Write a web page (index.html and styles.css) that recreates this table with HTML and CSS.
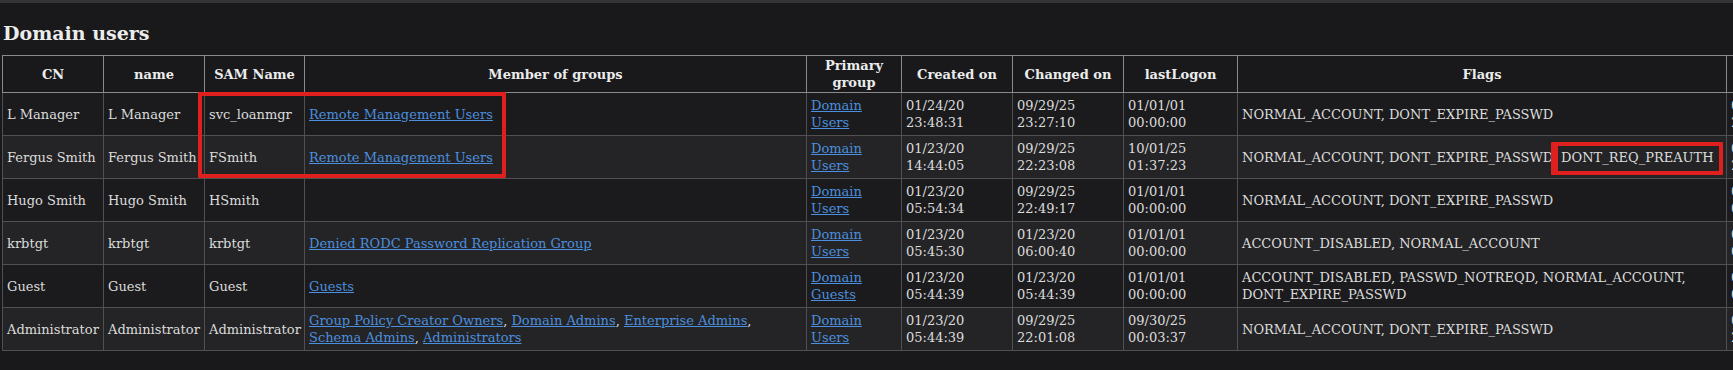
FILE: index.html
```html
<!DOCTYPE html>
<html lang="en">
<head>
<meta charset="utf-8">
<title>Domain users</title>
<link rel="stylesheet" href="styles.css">
</head>
<body>
<div class="topbar"></div>
<main class="page">
  <h3 class="title">Domain users</h3>
  <div class="table-wrap">
    <table class="users">
      <colgroup>
        <col class="c-cn"><col class="c-name"><col class="c-sam"><col class="c-groups"><col class="c-primary"><col class="c-date"><col class="c-date"><col class="c-logon"><col class="c-flags"><col class="c-extra">
      </colgroup>
      <thead>
        <tr><th>CN</th><th>name</th><th>SAM Name</th><th>Member of groups</th><th>Primary group</th><th>Created on</th><th>Changed on</th><th>lastLogon</th><th>Flags</th><th>pwdLastSet</th></tr>
      </thead>
      <tbody>
        <tr>
          <td>L Manager</td><td>L Manager</td><td>svc_loanmgr</td>
          <td><a href="#">Remote Management Users</a></td>
          <td><a href="#">Domain Users</a></td>
          <td>01/24/20 23:48:31</td><td>09/29/25 23:27:10</td><td>01/01/01 00:00:00</td>
          <td>NORMAL_ACCOUNT, DONT_EXPIRE_PASSWD</td><td>09/29/25 23:27:10</td>
        </tr>
        <tr>
          <td>Fergus Smith</td><td>Fergus Smith</td><td>FSmith</td>
          <td><a href="#">Remote Management Users</a></td>
          <td><a href="#">Domain Users</a></td>
          <td>01/23/20 14:44:05</td><td>09/29/25 22:23:08</td><td>10/01/25 01:37:23</td>
          <td>NORMAL_ACCOUNT, DONT_EXPIRE_PASSWD, DONT_REQ_PREAUTH</td><td>09/29/25 22:23:08</td>
        </tr>
        <tr>
          <td>Hugo Smith</td><td>Hugo Smith</td><td>HSmith</td>
          <td></td>
          <td><a href="#">Domain Users</a></td>
          <td>01/23/20 05:54:34</td><td>09/29/25 22:49:17</td><td>01/01/01 00:00:00</td>
          <td>NORMAL_ACCOUNT, DONT_EXPIRE_PASSWD</td><td>01/23/20 05:54:34</td>
        </tr>
        <tr>
          <td>krbtgt</td><td>krbtgt</td><td>krbtgt</td>
          <td><a href="#">Denied RODC Password Replication Group</a></td>
          <td><a href="#">Domain Users</a></td>
          <td>01/23/20 05:45:30</td><td>01/23/20 06:00:40</td><td>01/01/01 00:00:00</td>
          <td>ACCOUNT_DISABLED, NORMAL_ACCOUNT</td><td>01/23/20 05:45:30</td>
        </tr>
        <tr>
          <td>Guest</td><td>Guest</td><td>Guest</td>
          <td><a href="#">Guests</a></td>
          <td><a href="#">Domain Guests</a></td>
          <td>01/23/20 05:44:39</td><td>01/23/20 05:44:39</td><td>01/01/01 00:00:00</td>
          <td>ACCOUNT_DISABLED, PASSWD_NOTREQD, NORMAL_ACCOUNT, DONT_EXPIRE_PASSWD</td><td>01/01/01 00:00:00</td>
        </tr>
        <tr>
          <td>Administrator</td><td>Administrator</td><td>Administrator</td>
          <td><a href="#">Group Policy Creator Owners</a>, <a href="#">Domain Admins</a>, <a href="#">Enterprise Admins</a>, <a href="#">Schema Admins</a>, <a href="#">Administrators</a></td>
          <td><a href="#">Domain Users</a></td>
          <td>01/23/20 05:44:39</td><td>09/29/25 22:01:08</td><td>09/30/25 00:03:37</td>
          <td>NORMAL_ACCOUNT, DONT_EXPIRE_PASSWD</td><td>09/29/25 22:01:08</td>
        </tr>
      </tbody>
    </table>
    <div class="mark mark-groups"></div>
    <div class="mark mark-preauth"></div>
  </div>
</main>
</body>
</html>
```
FILE: styles.css
```css
html, body {
  margin: 0;
  padding: 0;
  overflow: hidden;
}
body {
  background: #19191b;
  color: #dcdcdc;
  font-family: "DejaVu Serif", serif;
  font-size: 13px;
  line-height: 17px;
}
.topbar {
  height: 3px;
  background: #343436;
}
.page {
  padding: 0 2px;
  overflow: hidden;
}
.title {
  margin: 19px 0 11px 1px;
  font-size: 19px;
  line-height: 22px;
  font-weight: bold;
  color: #ececec;
}
.table-wrap {
  position: relative;
  width: max-content;
}
.users {
  border-collapse: collapse;
  table-layout: fixed;
  width: 1835px;
}
.c-cn { width: 101px; }
.c-name { width: 101px; }
.c-sam { width: 100px; }
.c-groups { width: 502px; }
.c-primary { width: 95px; }
.c-date { width: 111px; }
.c-logon { width: 114px; }
.c-flags { width: 489px; }
.c-extra { width: 111px; }
.users th {
  border: 1px solid #8a8a8a;
  padding: 1px 4px;
  font-weight: bold;
  text-align: center;
  color: #ececec;
  background: #19191b;
}
.users td {
  border: 1px solid #505052;
  padding: 4px;
  text-align: left;
  vertical-align: middle;
  background: #1b1b1d;
}
.users tbody tr:nth-child(even) td {
  background: #242426;
}
.users a {
  color: #4b8fdf;
  text-decoration: underline;
}
.mark {
  position: absolute;
  box-sizing: border-box;
  border: 4px solid #e0201e;
  border-radius: 1px;
  pointer-events: none;
}
.mark-groups {
  left: 196px;
  top: 37px;
  width: 308px;
  height: 86px;
}
.mark-preauth {
  left: 1549px;
  top: 87px;
  width: 172px;
  height: 33px;
  border-left-width: 7px;
}
```
